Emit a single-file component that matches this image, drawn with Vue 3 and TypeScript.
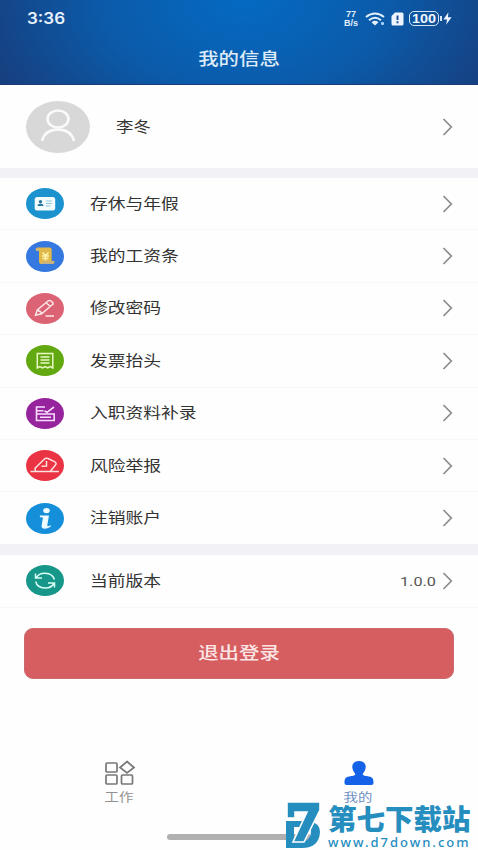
<script setup lang="ts">
interface Row {
  icon: string
  label: string
  color: string
}

const rows: Row[] = [
  { icon: 'card', label: '存休与年假', color: '#1c93cf' },
  { icon: 'scroll', label: '我的工资条', color: '#3478e0' },
  { icon: 'pencil', label: '修改密码', color: '#dc6373' },
  { icon: 'receipt', label: '发票抬头', color: '#62a810' },
  { icon: 'form', label: '入职资料补录', color: '#96249c' },
  { icon: 'report', label: '风险举报', color: '#ea3343' },
  { icon: 'info', label: '注销账户', color: '#168fda' },
]
</script>

<template>
  <div class="screen">
    <header class="header">
      <div class="status">
        <span class="time"><span class="wide">3:36</span></span>
        <div class="signals">
          <div class="speed"><span>77</span><span>B/s</span></div>
          <svg class="wifi" viewBox="0 0 20 14">
            <g fill="none" stroke="#e3effc" stroke-width="2">
              <path d="M1 5Q10-2 19 5M4 8.2q6-4.800 12 0" />
            </g>
            <path d="M6.500 10.200q3.500-2.800 7 0L10 13.500Z" fill="#e3effc" />
            <rect x="16" y="10" width="3" height="3" rx="1" fill="#9fd0f2" />
          </svg>
          <svg class="sim" viewBox="0 0 13 14">
            <path d="M4 .5h7Q12.500.5 12.500 2v10q0 1.500-1.500 1.500H2Q.5 13.500.5 12V4Z" fill="#edf4fd" />
            <path d="M6.500 3.500v4.500M6.500 9.300v2" stroke="#164b93" stroke-width="1.900" />
          </svg>
          <div class="battery"><span class="charge">100</span></div>
          <svg class="bolt" viewBox="0 0 10 14"><path d="M6 0 .5 8H4.500L3.500 14 9.500 5.500H5.500Z" fill="#edf4fd" /></svg>
        </div>
      </div>
      <h1 class="title"><span class="wide">我的信息</span></h1>
    </header>

    <section class="profile">
      <svg class="avatar" viewBox="0 0 64 52">
        <ellipse cx="32" cy="26" rx="32" ry="26" fill="#d8d8d8" />
        <g fill="none" stroke="#fafafa" stroke-width="2.600">
          <ellipse cx="32" cy="18" rx="10.500" ry="8.500" />
          <path d="M16 40Q19 28.500 32 28.500T48 40" />
        </g>
      </svg>
      <span class="name wide">李冬</span>
      <svg class="chevron" viewBox="0 0 11 18"><path d="M1.500 1 9.300 9 1.500 17" /></svg>
    </section>

    <div class="gap first"></div>

    <section class="list">
      <div v-for="row in rows" :key="row.icon" class="row">
        <svg class="badge" viewBox="0 0 38 31">
          <ellipse cx="19" cy="15.500" rx="19" ry="15.500" :fill="row.color" />
          <g v-if="row.icon === 'card'">
            <rect x="8.700" y="9" width="20.500" height="13.500" rx="2.500" fill="#f2fbfe" />
            <circle cx="14.500" cy="13.800" r="1.700" fill="#28779d" />
            <path d="M11.500 18q0-2.300 3-2.300t3 2.300Z" fill="#28779d" />
            <path d="M20 13h6M20 15.500h6M20 18h4.500" stroke="#91c9dc" stroke-width="1" />
          </g>
          <g v-else-if="row.icon === 'scroll'">
            <path d="M10 9.500Q9 7 11.500 6.500H24q2 .5 1.700 3V20h2.700q0 3-2.500 3H15q-2 0-2-3V10Z" fill="#dfb849" />
            <path d="M10 9.800h3V8.500Q12.500 6.500 11 7T10 9.800M16.500 20.500h12q0 2.500-2.500 2.500H15q1.500-.5 1.500-2.500" fill="#c6b282" />
            <path d="m16.500 11.500 3 3 3-3M16 15h7M16.500 17.500h6M19.500 14.500v5" fill="none" stroke="#fff2ae" stroke-width="1.500" />
          </g>
          <g v-else-if="row.icon === 'pencil'" fill="none" stroke="#fce6e8" stroke-width="1.500">
            <path d="m9.500 22.300 1.800-5.300L22 8q1.500-1 3 0l1.600 1.300q1.200 1.200-.4 2.500l-10.500 9ZM20 9.700l4.300 3.700M11.300 17q1.500-.3 1.700 1.300 2-.2 2.700 2.500M19.500 23H28" />
          </g>
          <g v-else-if="row.icon === 'receipt'" fill="none" stroke="#eaf8c5" stroke-width="1.500">
            <path d="M11.300 8.500h15.500v14.500l-2.600-1.500-2.500 1.500-2.600-1.500-2.600 1.500-2.600-1.500-2.600 1.500ZM14.500 12h9M14.500 15h9M14.500 18h9" />
          </g>
          <g v-else-if="row.icon === 'form'" fill="none" stroke="#f8ddff" stroke-width="1.600">
            <path d="M19 9h-8.500v13.500h17.700v-6.500H10.500M10.500 12.700h7M18.500 13l2.500 1.300 7-5.300M14 19.300h11" />
          </g>
          <g v-else-if="row.icon === 'report'" fill="none" stroke="#ffe1df" stroke-width="1.500">
            <path d="M4.500 21.500H33M9.500 21 9 18.300 18 9.500q1.500-1.700 4-1l6.500 3.200q2.500 1.300 1 3.300l-5 6M20.500 11v5l-5 .3" />
          </g>
          <g v-else>
            <ellipse cx="20.500" cy="7.600" rx="3.300" ry="2.600" fill="#effcff" />
            <path d="M14 12.500h9L21.300 22q-.2 1.300 1 1.200l2.500-1-.2 1.500q-4.300 2.500-7.400 1.800-2-.5-1.500-3.500l1.300-7.500-3.200-.3Z" fill="#effcff" />
          </g>
        </svg>
        <span class="label wide">{{ row.label }}</span>
        <svg class="chevron" viewBox="0 0 11 18"><path d="M1.500 1 9.300 9 1.500 17" /></svg>
      </div>
    </section>

    <div class="gap"></div>

    <section class="row version">
      <svg class="badge" viewBox="0 0 38 31">
        <ellipse cx="19" cy="15.500" rx="19" ry="15.500" fill="#17968a" />
        <g fill="none" stroke="#d8fff6" stroke-width="1.500">
          <path d="M9.500 8.500v4.500H16M10 13Q13 8 19 8.200q8 .3 9.300 6.500M28.500 22.500V18H22M28 18.500q-3 4.800-9 4.500-8-.3-9.300-6.500" />
        </g>
      </svg>
      <span class="label wide">当前版本</span>
      <span class="number"><span class="wide">1.0.0</span></span>
      <svg class="chevron" viewBox="0 0 11 18"><path d="M1.500 1 9.300 9 1.500 17" /></svg>
    </section>

    <div class="action">
      <button class="logout"><span class="wide">退出登录</span></button>
    </div>

    <nav class="tabs">
      <div class="tab">
        <svg class="tab-icon" viewBox="0 0 32 26">
          <g fill="none" stroke="#777" stroke-width="1.700">
            <rect x="2" y="3" width="11" height="9" rx="1" />
            <path d="m23 1.500 7 6-7 5.500-7-5.500Z" />
            <rect x="2" y="15" width="11" height="9" rx="1" />
            <rect x="17.500" y="15" width="11" height="9" rx="1" />
          </g>
        </svg>
        <span class="tab-text wide">工作</span>
      </div>
      <div class="tab active">
        <svg class="tab-icon" viewBox="0 0 32 26">
          <path d="M16 1c5 0 7.500 3.500 6.500 7.500-.5 2.500-2 4-2.700 5.500-.3 1.500 3 1.800 6 2.500 4 .8 4.700 2.500 4.700 6V23q0 2-2 2h-25q-2 0-2-2v-.5c0-3.500.7-5.200 4.700-6 3-.7 6.300-1 6-2.500-.7-1.500-2.200-3-2.700-5.500C8.500 4.500 11 1 16 1Z" fill="#1462e8" />
        </svg>
        <span class="tab-text wide">我的</span>
      </div>
    </nav>

    <div class="home-bar"></div>

    <div class="watermark">
      <svg class="mark" viewBox="0 0 36 50">
        <path fill-rule="evenodd" d="M1 21H24Q35 23 35 32 34 48 17 48H1ZM9 27V42H15Q26 41 26 32 26 27 20 27Z" fill="#268dbf" />
        <path d="M2 2H35V10L19 42H8L22 12H10V18H2Z" fill="#268dbf" stroke="#fefefe" stroke-width="1.600" />
      </svg>
      <div class="site">
        <span class="site-name">第七下载站</span>
        <span class="site-url">www.d7down.com</span>
      </div>
    </div>
  </div>
</template>

<style>
body {
  margin: 0;
  overflow: hidden;
}
</style>

<style scoped>
.screen {
  position: relative;
  display: flex;
  flex-direction: column;
  box-sizing: border-box;
  width: 478px;
  height: 850px;
  overflow: hidden;
  background: #fefefe;
  font-family: Roboto, "Noto Sans CJK SC", sans-serif;
  color: #333;
}
.wide {
  display: inline-block;
  transform: scaleX(1.2);
  transform-origin: left center;
  white-space: nowrap;
}
.header {
  flex: none;
  height: 85px;
  background: radial-gradient(ellipse 310px 200px at 245px 0, #046ac2 0%, #0b5baa 45%, #173e7d 90%);
  box-shadow: inset 0 -1px #183c78;
}
.status {
  display: flex;
  align-items: center;
  justify-content: space-between;
  height: 37px;
  padding: 0 26px 0 27px;
}
.time {
  font: 600 15.500px/20px Inter, sans-serif;
  color: #e8f1fc;
}
.time .wide { transform: scaleX(1.1); }
.signals { display: flex; align-items: center; }
.speed {
  display: flex;
  flex-direction: column;
  align-items: center;
  width: 16px;
  margin-right: 6px;
  font: 700 9px/9px "Liberation Sans", sans-serif;
  color: #e3effc;
}
.wifi { width: 20px; height: 14px; margin-right: 6px; }
.sim { width: 13px; height: 14px; margin-right: 5px; }
.battery {
  position: relative;
  display: flex;
  align-items: center;
  justify-content: center;
  box-sizing: border-box;
  width: 30px;
  height: 15px;
  margin-right: 4px;
  border: 1.500px solid #d5e5f8;
  border-radius: 5px;
  font: 700 12px/12px "Liberation Sans", sans-serif;
  color: #f0f6fe;
}
.battery::after {
  content: "";
  position: absolute;
  right: -4px;
  top: 4px;
  width: 2px;
  height: 5px;
  background: #d5e5f8;
}
.charge { transform: scaleX(1.2); }
.bolt { width: 9px; height: 13px; }
.title {
  margin: 10px 0 0;
  font-size: 17px;
  line-height: 24px;
  font-weight: 500;
  text-align: center;
  color: #dfebf8;
}
.title .wide, .logout .wide, .tab-text { transform-origin: center; }
.profile {
  display: flex;
  align-items: center;
  flex: none;
  height: 83px;
  padding: 0 25px 0 26px;
}
.avatar { width: 64px; height: 52px; margin-right: 26px; }
.name { margin-bottom: 2px; font-size: 14.500px; }
.gap { flex: none; height: 11px; background: #f1f1f6; }
.gap.first { height: 10px; }
.list { flex: none; }
.row {
  display: flex;
  align-items: center;
  box-sizing: border-box;
  height: 52.400px;
  padding: 0 25px 0 26px;
  border-bottom: 1px solid #f7f7f7;
}
.list .row:last-child { height: 51.600px; border-bottom: 0; }
.badge { flex: none; width: 38px; height: 31px; margin-right: 26px; }
.label { font-size: 14.800px; line-height: 24px; }
.chevron {
  width: 11px;
  height: 18px;
  margin-left: auto;
  fill: none;
  stroke: #8c8c8c;
  stroke-width: 1.700;
}
.number { width: 37px; margin-left: auto; font-size: 13.500px; color: #555; }
.number + .chevron { margin-left: 5px; }
.version { flex: none; height: 53px; }
.action { flex: none; padding: 20px 24px 0; }
.logout {
  display: block;
  box-sizing: border-box;
  width: 430px;
  height: 51px;
  padding: 0;
  border: 1px solid #c96a6c;
  border-radius: 9px;
  background: #d65e60;
  font: 500 17px/24px Roboto, "Noto Sans CJK SC", sans-serif;
  color: #fbe5e5;
}
.tabs { display: flex; flex: none; margin-top: 81px; }
.tab {
  display: flex;
  flex: 1;
  flex-direction: column;
  align-items: center;
  color: #929292;
}
.tab-icon { width: 32px; height: 26px; }
.tab-text { margin-top: 3px; font-size: 12px; line-height: 18px; }
.active { color: #6d8fc2; }
.home-bar {
  position: absolute;
  left: 167px;
  top: 834px;
  width: 144px;
  height: 6px;
  border-radius: 3px;
  background: #b0b0b0;
}
.watermark {
  position: absolute;
  left: 285px;
  top: 800px;
  display: flex;
  gap: 7px;
  color: #268dbf;
}
.mark { width: 36px; height: 50px; }
.site { display: flex; flex-direction: column; white-space: nowrap; }
.site-name { height: 35px; font: 900 28.500px/36px "Noto Sans CJK SC", sans-serif; }
.site-url { font: 500 13px/15px "Noto Sans", sans-serif; letter-spacing: 2px; }
</style>
